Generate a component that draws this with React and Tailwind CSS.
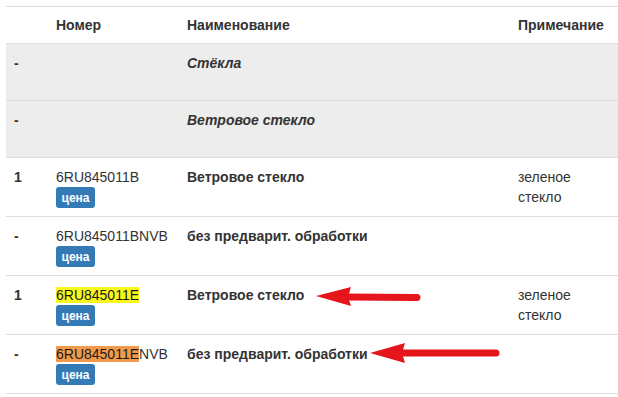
import React from "react";

const row = "grid grid-cols-[42px_131px_331px_1fr] border-b border-[#dddddd]";
const cell = "px-2 pt-[9px]";

function PriceBadge() {
  return (
    <div className="mt-0 flex h-[21px] w-[39px] items-center justify-center rounded-[3px] bg-[#337ab7] text-[12px] font-bold leading-none text-white">
      цена
    </div>
  );
}

function GroupRow({ title }) {
  return (
    <div className={`${row} h-[57px] bg-[#ededed]`}>
      <div className={`${cell} font-bold`}>-</div>
      <div className={cell}></div>
      <div className={`${cell} font-bold italic`}>{title}</div>
      <div className={cell}></div>
    </div>
  );
}

function PartRow({ pos, number, name, note }) {
  return (
    <div className={`${row} h-[59px] bg-white`}>
      <div className={`${cell} font-bold`}>{pos}</div>
      <div className={cell}>
        <div className="whitespace-nowrap">{number}</div>
        <PriceBadge />
      </div>
      <div className={`${cell} font-bold`}>{name}</div>
      <div className={cell}>{note}</div>
    </div>
  );
}

function Arrows() {
  const red = "#e5151c";
  return (
    <svg
      className="pointer-events-none absolute left-0 top-0"
      width="618"
      height="397"
      viewBox="0 0 618 397"
    >
      <line x1="346" y1="297" x2="417" y2="297.5" stroke={red} strokeWidth="7" strokeLinecap="round" />
      <polygon points="316,296 351,287 348,297 351,306" fill={red} />
      <line x1="400" y1="353" x2="496" y2="353" stroke={red} strokeWidth="7" strokeLinecap="round" />
      <polygon points="370,353 405,343 402,353 405,363" fill={red} />
    </svg>
  );
}

export default function App() {
  return (
    <div
      className="relative h-[397px] w-[618px] overflow-hidden bg-white pl-[6px] pt-[6px] text-[14px] leading-[20px] text-[#333333]"
      style={{ fontFamily: '"Liberation Sans", Arial, sans-serif' }}
    >
      <div className="grid h-[38px] grid-cols-[42px_131px_331px_1fr] border-y border-[#dddddd] font-bold">
        <div className="px-2 pt-2"></div>
        <div className="px-2 pt-2">Номер</div>
        <div className="px-2 pt-2">Наименование</div>
        <div className="px-2 pt-2">Примечание</div>
      </div>

      <GroupRow title="Стёкла" />
      <GroupRow title="Ветровое стекло" />

      <PartRow pos="1" number="6RU845011B" name="Ветровое стекло" note={<>зеленое<br />стекло</>} />
      <PartRow pos="-" number="6RU845011BNVB" name="без предварит. обработки" note="" />
      <PartRow
        pos="1"
        number={<span className="bg-[#f8f81c] text-[#1a1a1a]">6RU845011E</span>}
        name="Ветровое стекло"
        note={<>зеленое<br />стекло</>}
      />
      <PartRow
        pos="-"
        number={
          <>
            <span className="bg-[#f29a4c] text-[#1a1a1a]">6RU845011E</span>NVB
          </>
        }
        name="без предварит. обработки"
        note=""
      />

      <Arrows />
    </div>
  );
}
